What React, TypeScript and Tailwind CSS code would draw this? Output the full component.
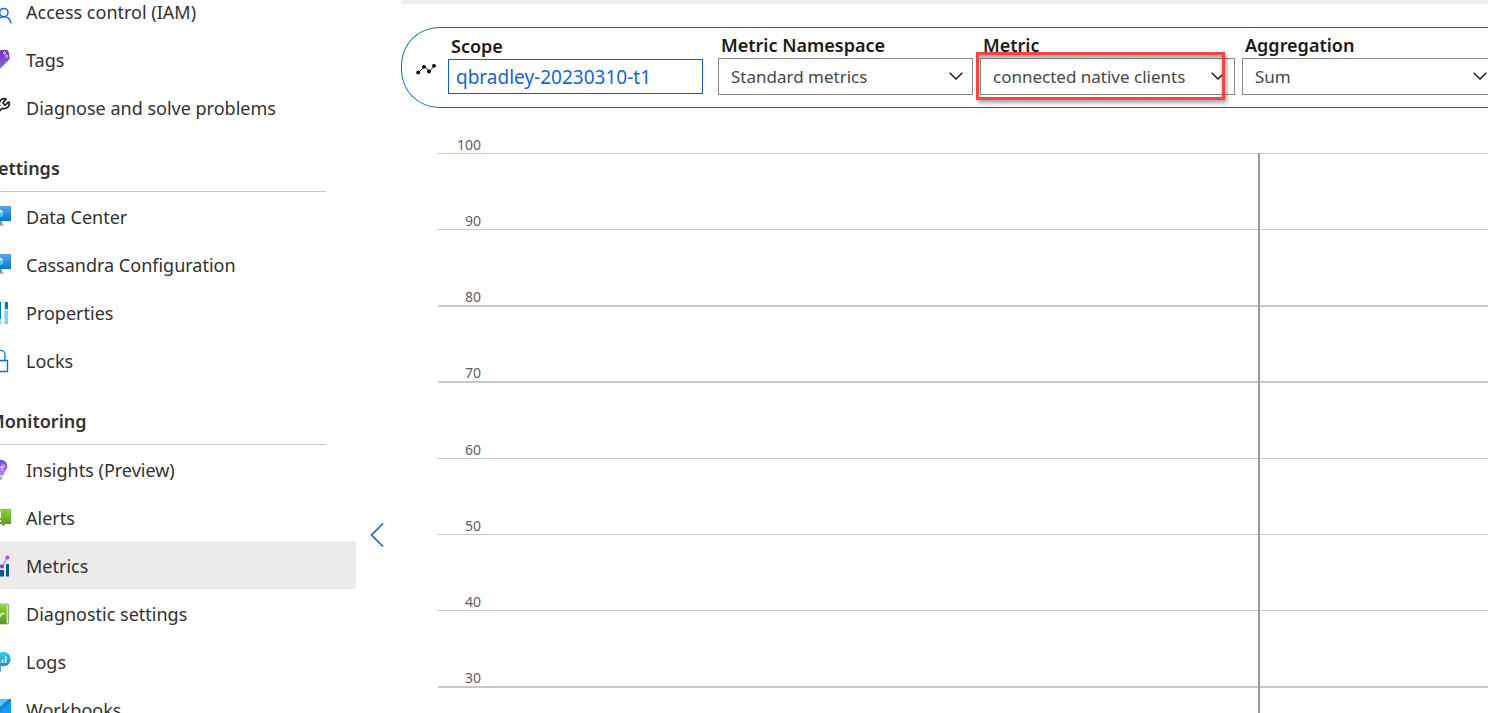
import type { ReactNode } from "react";
import { Wrench } from "lucide-react";

function Glyph({ children }: { children: ReactNode }) {
  return (
    <svg viewBox="0 0 20 20" className="size-5 shrink-0 overflow-visible" fill="none" aria-hidden="true">
      {children}
    </svg>
  );
}

function PersonIcon() {
  return (
    <Glyph>
      <g stroke="#0f6ce0" strokeWidth="1.5">
        <circle cx="12.8" cy="11.6" r="4.2" />
        <path d="M5.5 22.3c.6-3.8 3.3-6.5 7.3-6.5s6.600 2.700 7.400 6.500" />
      </g>
    </Glyph>
  );
}

function TagIcon() {
  return (
    <Glyph>
      <defs>
        <linearGradient id="tag" x1="0" y1="0" x2="0" y2="1">
          <stop offset="0" stopColor="#6632b8" />
          <stop offset="1" stopColor="#9b6ae0" />
        </linearGradient>
      </defs>
      <path d="M1 10 8 1.200 14.500.8c1.500 0 2.600.8 3.100 2.300l1.100 5c.2 1.200-.1 2.100-.9 2.900L8 21z" fill="url(#tag)" />
      <circle cx="13.500" cy="4" r="1.100" stroke="#e8dcff" />
      <circle cx="15.600" cy="7.300" r="1.100" stroke="#e8dcff" />
    </Glyph>
  );
}

function WrenchIcon() {
  return (
    <span className="flex size-5 shrink-0 items-start justify-end">
      <Wrench size={20} strokeWidth={2} color="#1b1a19" className="shrink-0" aria-hidden="true" />
    </span>
  );
}

function MonitorIcon() {
  return (
    <Glyph>
      <defs>
        <linearGradient id="screen" x1="0" y1="0" x2="0" y2="1">
          <stop offset="0" stopColor="#5ea0ef" />
          <stop offset="1" stopColor="#0078d4" />
        </linearGradient>
      </defs>
      <path d="M7 15h4c.1 2.600.7 3.900 2.500 4.400V20h-9v-.6C6.300 18.900 6.900 17.600 7 15z" fill="#949494" />
      <path d="M4.500 19.200h9.300v.9H4.500z" fill="#d6d6d6" />
      <rect y="0" width="20" height="15" fill="url(#screen)" />
      <path d="m8.800 3.300 3.400 2v4.200l-3.400 2-3.600-2V5.300z" fill="#50c8f5" />
      <path d="m8.800 3.300 3.400 2-3.400 2-3.600-2z" fill="#b5f0ff" />
    </Glyph>
  );
}

function PropertiesIcon() {
  return (
    <Glyph>
      <path d="M7 0h3v17H7zM14 0h3v7h-3zM0 0h3v10H0z" fill="#0078d4" />
      <path d="M7 17h3v2H7zM14 7h3v2h-3zM13 0h1v22h-1z" fill="#d2dbe2" />
      <path d="M7 19h3v3H7zM14 9h3v13h-3zM0 12h3v10H0z" fill="#50e6ff" />
    </Glyph>
  );
}

function LockIcon() {
  return (
    <Glyph>
      <path d="M5 10V4.800a4.500 4.500 0 0 1 9 0V10M2 10.500h14.500v11H2z" stroke="#0f6ce0" strokeWidth="1.300" />
    </Glyph>
  );
}

function BulbIcon() {
  return (
    <Glyph>
      <defs>
        <linearGradient id="bulb" x1="0" y1="0" x2="0" y2="1">
          <stop offset="0" stopColor="#7a45d8" />
          <stop offset="1" stopColor="#b186fa" />
        </linearGradient>
      </defs>
      <path d="M16.300 7.300c0 4-3.300 5.200-3.700 9.200H6.500C6.100 12.500 3 11.300 3 7.300a6.600 6.600 0 0 1 13.300 0z" fill="url(#bulb)" />
      <path d="M11 12V6.500m0 1.800h2a1.300 1.300 0 1 0-2-1.200M9 8.300h2" stroke="#eadfff" />
      <path d="M7 17.500h4.500v2.200L10 21H8.500L7 19.700z" fill="#b3b0ad" />
    </Glyph>
  );
}

function AlertsIcon() {
  return (
    <Glyph>
      <defs>
        <linearGradient id="alert" x1="0" y1="0" x2="0" y2="1">
          <stop offset="0" stopColor="#86d633" />
          <stop offset="1" stopColor="#5e9624" />
        </linearGradient>
      </defs>
      <path d="M0 2h20v15h-6.500v2.500L10 17H0z" fill="url(#alert)" />
      <path d="M7.500 4.500H10V11H7.500zM7.500 13H10v2H7.500z" fill="#fff" />
    </Glyph>
  );
}

function MetricsIcon() {
  return (
    <Glyph>
      <path d="M2 12h4v9H2zM9 15h4v6.500H9zM15 9h3v12.500h-3z" fill="#005ba1" />
      <path d="m3 14 4-5.500 4 3.300 5.300-9.300" stroke="#b796f9" strokeWidth="1.600" />
      <circle cx="16.400" cy="2.600" r="2" fill="#a05be8" />
      <circle cx="11" cy="11.600" r="2" fill="#7a3fdc" />
    </Glyph>
  );
}

function DiagnosticIcon() {
  return (
    <Glyph>
      <rect x="1" y="1" width="16.500" height="20" rx="1" fill="#c9e6a8" stroke="#8cae68" />
      <rect x="0" y="2" width="15.500" height="19" fill="url(#alert)" />
      <path d="m4 12 3-3 2.500 4 1.500-2.500h2.500" stroke="#f2ffe0" strokeWidth="1.300" />
    </Glyph>
  );
}

function LogsIcon() {
  return (
    <Glyph>
      <defs>
        <linearGradient id="logs" x1="0" y1="0" x2="0" y2="1">
          <stop offset="0" stopColor="#32d4f5" />
          <stop offset="1" stopColor="#198ab3" />
        </linearGradient>
      </defs>
      <path d="M6 14h4v6.500l-2 1.500H6z" fill="#5ea0ef" />
      <circle cx="12.300" cy="8" r="7.300" fill="url(#logs)" />
      <path d="M10.800 8.500h1.500V12h-1.500zM13.800 5.500h1.700V12h-1.700zM8 10h1.300v2H8z" fill="#fff" />
    </Glyph>
  );
}

function WorkbooksIcon() {
  return (
    <Glyph>
      <rect y="0" width="20" height="20" rx="0.600" fill="#0f9fee" />
      <path d="M0 0h18L0 18z" fill="#50c8f8" />
      <path d="M18 0h2v2.500L6 16 0 18v-2z" fill="#1a7fe0" />
    </Glyph>
  );
}

type Item = { label: string; icon: ReactNode; active?: boolean };

const groups: { title?: string; items: Item[] }[] = [
  {
    items: [
      { label: "Access control (IAM)", icon: <PersonIcon /> },
      { label: "Tags", icon: <TagIcon /> },
      { label: "Diagnose and solve problems", icon: <WrenchIcon /> },
    ],
  },
  {
    title: "Settings",
    items: [
      { label: "Data Center", icon: <MonitorIcon /> },
      { label: "Cassandra Configuration", icon: <MonitorIcon /> },
      { label: "Properties", icon: <PropertiesIcon /> },
      { label: "Locks", icon: <LockIcon /> },
    ],
  },
  {
    title: "Monitoring",
    items: [
      { label: "Insights (Preview)", icon: <BulbIcon /> },
      { label: "Alerts", icon: <AlertsIcon /> },
      { label: "Metrics", icon: <MetricsIcon />, active: true },
      { label: "Diagnostic settings", icon: <DiagnosticIcon /> },
      { label: "Logs", icon: <LogsIcon /> },
      { label: "Workbooks", icon: <WorkbooksIcon /> },
    ],
  },
];

function Sidebar() {
  return (
    <nav className="-mt-[13px] -ml-3 w-[368px] shrink-0 text-lg leading-6 text-[#323130]">
      {groups.map((group, i) => (
        <section key={i}>
          {group.title && (
            <h2 className="mr-[30px] flex h-[61px] items-center border-b border-[#c8c8c8] pt-3.5 font-semibold">
              {group.title}
            </h2>
          )}
          <ul>
            {group.items.map((item) => (
              <li key={item.label}>
                <a
                  href="#"
                  aria-current={item.active ? "page" : undefined}
                  className={`flex h-12 items-center gap-[15px] pl-[3px] ${item.active ? "bg-[#ecebe9]" : ""}`}
                >
                  {item.icon}
                  <span className="pt-0.5">{item.label}</span>
                </a>
              </li>
            ))}
          </ul>
        </section>
      ))}
    </nav>
  );
}

function SelectField({ id, label, value, children }: { id: string; label: string; value: string; children?: ReactNode }) {
  return (
    <div className="relative w-[255px] shrink-0">
      <label htmlFor={id} className="block pb-px pl-[3px] text-lg leading-6 font-semibold text-[#1b1a19]">
        {label}
      </label>
      <div className="relative">
        <select
          id={id}
          defaultValue={value}
          className="block h-[37px] w-full appearance-none border border-[#8a8886] bg-white pl-3 text-[17px] text-[#484644]"
        >
          <option>{value}</option>
        </select>
        <svg viewBox="0 0 14 8" className="pointer-events-none absolute top-3.5 right-[10px] h-2 w-3.5" fill="none" aria-hidden="true">
          <path d="m.7.700 6.300 6.300L13.300.700" stroke="#201f1e" strokeWidth="1.500" />
        </svg>
      </div>
      {children}
    </div>
  );
}

function MetricBar() {
  return (
    <div className="mt-[23px] flex h-[81px] overflow-hidden rounded-l-[38px] border-y border-l border-[#0f6cbd] pt-1.5 pl-[14px]">
      <svg viewBox="0 0 20 12" className="mt-[29px] h-3 w-5 shrink-0" aria-hidden="true">
        <path d="m2.500 9.500 6-6 5 4.500 5.500-5.500" fill="none" stroke="#222" />
        <g fill="#000">
          <circle cx="2.200" cy="9.500" r="1.900" />
          <circle cx="8" cy="3.800" r="1.900" />
          <circle cx="13" cy="8.500" r="1.900" />
          <circle cx="18" cy="2.800" r="1.900" />
        </g>
      </svg>
      <div className="ml-3 w-[255px] shrink-0">
        <label htmlFor="scope" className="block pb-px pl-[3px] text-lg leading-6 font-semibold text-[#1b1a19]">
          Scope
        </label>
        <input
          id="scope"
          readOnly
          value="qbradley-20230310-t1"
          className="block h-[35px] w-full border border-[#0b5cd0] bg-white px-[7px] text-[19px] text-[#1664d9]"
        />
      </div>
      <div className="-mt-px ml-[15px] flex gap-[7px]">
        <SelectField id="namespace" label="Metric Namespace" value="Standard metrics" />
        <SelectField id="metric" label="Metric" value="connected native clients">
          <div className="pointer-events-none absolute top-[19px] -left-1 h-12 w-[249px] border-3 border-[#fb4143] shadow-[inset_0_3px_3px_rgba(0,0,0,0.35),2px_3px_4px_rgba(0,0,0,0.35)]" />
        </SelectField>
        <SelectField id="aggregation" label="Aggregation" value="Sum" />
      </div>
    </div>
  );
}

const gridLines = [
  { value: 100, y: 33, weight: 1 },
  { value: 90, y: 109, weight: 1 },
  { value: 80, y: 185, weight: 2 },
  { value: 70, y: 261, weight: 2 },
  { value: 60, y: 338, weight: 1 },
  { value: 50, y: 414, weight: 1 },
  { value: 40, y: 490, weight: 1 },
  { value: 30, y: 566, weight: 2 },
];

function Chart() {
  return (
    <div className="mt-3 pl-[37px]">
      <svg className="block h-[640px] w-full" role="img" aria-label="Connected native clients, sum">
        {gridLines.map((line) => (
          <g key={line.value}>
            <rect x="0" y={line.y} width="100%" height={line.weight} fill="#c8c8c8" />
            <text x="43" y={line.y - 3} textAnchor="end" className="fill-[#605e5c] text-[14px]">
              {line.value}
            </text>
          </g>
        ))}
        <rect x="820" y="33" width="2" height="607" fill="#999" />
      </svg>
    </div>
  );
}

export default function App() {
  return (
    <div className="flex h-screen overflow-hidden bg-white font-['Noto_Sans','Open_Sans',sans-serif]">
      <Sidebar />
      <div className="w-[45px] shrink-0 pt-[522px] pl-3.5">
        <button type="button" aria-label="Collapse menu" className="block h-[26px] w-[15px]">
          <svg viewBox="0 0 15 26" fill="none" aria-hidden="true">
            <path d="M13 1.500 1.500 13 13 24.500" stroke="#0f62d6" strokeWidth="1.600" />
          </svg>
        </button>
      </div>
      <main className="min-w-0 flex-1">
        <div className="h-1 bg-[#eee]" />
        <MetricBar />
        <Chart />
      </main>
    </div>
  );
}
